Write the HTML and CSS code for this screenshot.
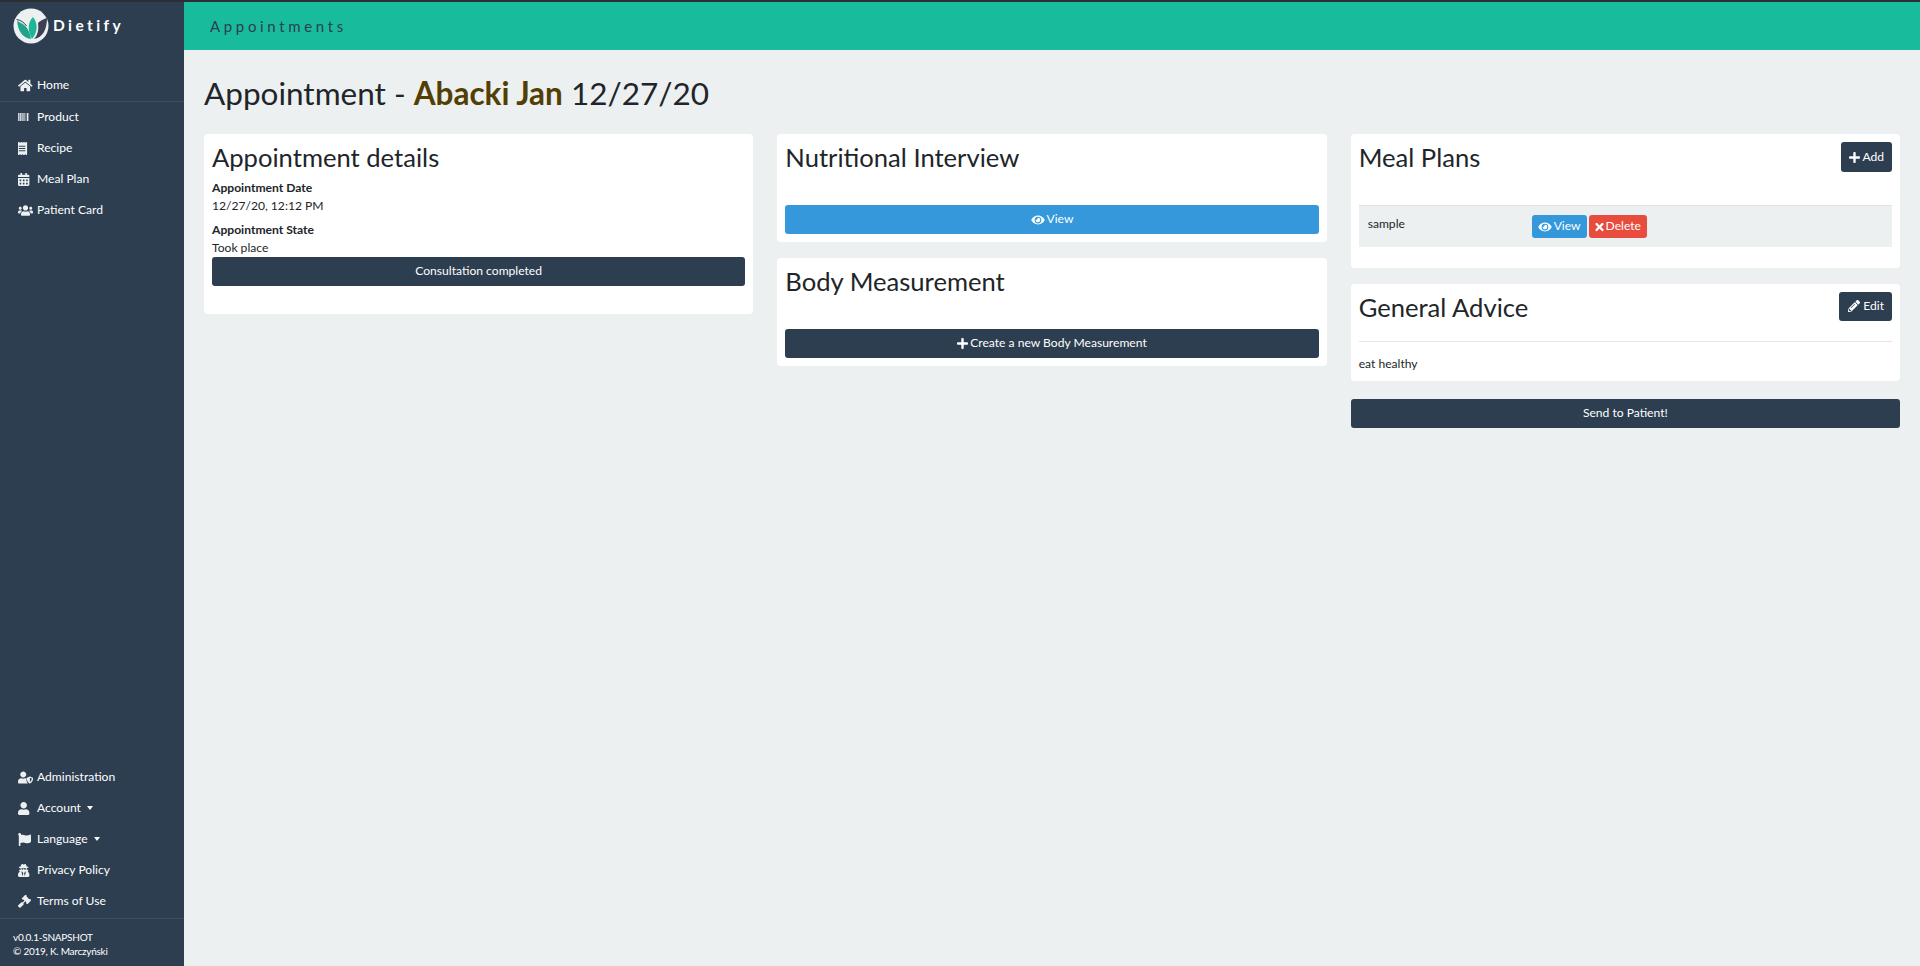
FILE: index.html
```html
<!DOCTYPE html>
<html lang="en">
<head>
<meta charset="utf-8">
<title>Dietify - Appointments</title>
<link rel="stylesheet" href="styles.css">
</head>
<body>
<svg class="defs" width="0" height="0" aria-hidden="true">
  <symbol id="i-home" viewBox="0 0 576 512" preserveAspectRatio="xMinYMid meet"><path d="M280.37 148.26L96 300.11V464a16 16 0 0 0 16 16l112.06-.29a16 16 0 0 0 15.92-16V368a16 16 0 0 1 16-16h64a16 16 0 0 1 16 16v95.64a16 16 0 0 0 16 16.05L464 480a16 16 0 0 0 16-16V300L295.67 148.26a12.19 12.19 0 0 0-15.3 0zM571.6 251.47L488 182.56V44.05a12 12 0 0 0-12-12h-56a12 12 0 0 0-12 12v72.61L318.47 43a48 48 0 0 0-61 0L4.34 251.47a12 12 0 0 0-1.6 16.9l25.5 31A12 12 0 0 0 45.15 301l235.22-193.74a12.19 12.19 0 0 1 15.3 0L530.9 301a12 12 0 0 0 16.9-1.6l25.5-31a12 12 0 0 0-1.7-16.93z"/></symbol>
  <symbol id="i-barcode" viewBox="0 0 720 512" preserveAspectRatio="xMinYMid meet"><path d="M0 40h40v384H0zM60 40h24v384H60zM104 40h40v384h-40zM164 40h24v384h-24zM208 40h40v384h-40zM268 40h24v384h-24zM312 40h40v384h-40zM420 40h80v384h-80z"/></symbol>
  <symbol id="i-receipt" viewBox="0 0 384 512" preserveAspectRatio="xMinYMid meet"><path d="M358 2L320 32 277 2a16 16 0 0 0-18 0l-43 30L173 2a16 16 0 0 0-18 0l-43 30L64 2C50-5 32 2 32 18v476c0 16 18 24 32 16l48-30 43 30a16 16 0 0 0 18 0l43-30 43 30a16 16 0 0 0 18 0l43-30 38 30c14 8 32 0 32-16V18c0-16-18-24-32-16zM320 360H64v-32h256zm0-88H64v-32h256zm0-88H64v-32h256z" transform="translate(-32 0)"/></symbol>
  <symbol id="i-calendar" viewBox="0 0 448 512" preserveAspectRatio="xMinYMid meet"><path d="M0 464c0 26.5 21.5 48 48 48h352c26.5 0 48-21.5 48-48V192H0v272zm320-196c0-6.6 5.4-12 12-12h40c6.6 0 12 5.4 12 12v40c0 6.6-5.4 12-12 12h-40c-6.6 0-12-5.4-12-12v-40zm0 128c0-6.6 5.4-12 12-12h40c6.6 0 12 5.4 12 12v40c0 6.6-5.4 12-12 12h-40c-6.6 0-12-5.4-12-12v-40zM192 268c0-6.6 5.4-12 12-12h40c6.6 0 12 5.4 12 12v40c0 6.6-5.4 12-12 12h-40c-6.6 0-12-5.4-12-12v-40zm0 128c0-6.6 5.4-12 12-12h40c6.6 0 12 5.4 12 12v40c0 6.6-5.4 12-12 12h-40c-6.6 0-12-5.4-12-12v-40zM64 268c0-6.6 5.4-12 12-12h40c6.6 0 12 5.4 12 12v40c0 6.6-5.4 12-12 12H76c-6.6 0-12-5.4-12-12v-40zm0 128c0-6.6 5.4-12 12-12h40c6.6 0 12 5.4 12 12v40c0 6.6-5.4 12-12 12H76c-6.6 0-12-5.4-12-12v-40zM400 64h-48V16c0-8.8-7.2-16-16-16h-32c-8.8 0-16 7.2-16 16v48H160V16c0-8.8-7.2-16-16-16h-32c-8.8 0-16 7.2-16 16v48H48C21.5 64 0 85.5 0 112v48h448v-48c0-26.5-21.5-48-48-48z"/></symbol>
  <symbol id="i-users" viewBox="0 0 640 512" preserveAspectRatio="xMinYMid meet"><path d="M96 224c35.3 0 64-28.7 64-64s-28.7-64-64-64-64 28.7-64 64 28.7 64 64 64zm448 0c35.3 0 64-28.7 64-64s-28.7-64-64-64-64 28.7-64 64 28.7 64 64 64zm32 32h-64c-17.6 0-33.5 7.1-45.1 18.6 40.3 22.1 68.9 62 75.1 109.4h66c17.7 0 32-14.3 32-32v-32c0-35.3-28.7-64-64-64zm-256 0c61.9 0 112-50.1 112-112S381.9 32 320 32 208 82.1 208 144s50.1 112 112 112zm76.8 32h-8.3c-20.8 10-43.9 16-68.5 16s-47.6-6-68.5-16h-8.3C179.6 288 128 339.6 128 403.2V432c0 26.5 21.5 48 48 48h288c26.5 0 48-21.5 48-48v-28.8c0-63.6-51.6-115.2-115.2-115.2zm-223.7-13.4C161.5 263.1 145.6 256 128 256H64c-35.3 0-64 28.7-64 64v32c0 17.7 14.3 32 32 32h65.9c6.3-47.4 34.9-87.3 75.2-109.4z"/></symbol>
  <symbol id="i-user-shield" viewBox="0 0 640 512" preserveAspectRatio="xMinYMid meet"><path d="M224 256c70.7 0 128-57.3 128-128S294.7 0 224 0 96 57.3 96 128s57.3 128 128 128zM358 288h-61c-22.2 10.2-46.9 16-73 16s-50.6-5.8-72.9-16h-16.7C60.2 288 0 348.2 0 422.4V464c0 26.5 21.5 48 48 48h352c9 0 17-2.4 24-6.6-40-40-66-104-66-190z"/><path fill-rule="evenodd" d="M634 265l-120-48a18 18 0 0 0-14 0l-120 48c-7 3-12 10-12 17 0 119 69 201 132 228a18 18 0 0 0 14 0c50-21 132-95 132-228 0-7-5-14-12-17zM507 448V268l80 32c-4 80-47 128-80 148z"/></symbol>
  <symbol id="i-user" viewBox="0 0 448 512" preserveAspectRatio="xMinYMid meet"><path d="M224 256c70.7 0 128-57.3 128-128S294.7 0 224 0 96 57.3 96 128s57.3 128 128 128zm89.6 32h-16.7c-22.2 10.2-46.9 16-72.9 16s-50.6-5.8-72.9-16h-16.7C60.2 288 0 348.2 0 422.4V464c0 26.5 21.5 48 48 48h352c26.5 0 48-21.5 48-48v-41.6c0-74.2-60.2-134.4-134.4-134.4z"/></symbol>
  <symbol id="i-flag" viewBox="0 0 512 512" preserveAspectRatio="xMinYMid meet"><path d="M349.565 98.783C295.978 98.783 251.721 64 184.348 64c-24.955 0-47.309 4.384-68.045 12.013a55.947 55.947 0 0 0 3.586-23.562C118.117 24.015 94.806 1.206 66.338.048 34.345-1.254 8 24.296 8 56c0 19.026 9.497 35.825 24 45.945V488c0 13.255 10.745 24 24 24h16c13.255 0 24-10.745 24-24v-94.4c28.311-12.064 63.582-22.122 114.435-22.122 53.588 0 97.844 34.783 165.217 34.783 48.169 0 86.667-16.294 122.505-40.858C506.84 359.452 512 349.571 512 339.045v-243.1c0-23.393-24.269-38.87-45.485-29.016-34.338 15.948-76.454 31.854-116.95 31.854z"/></symbol>
  <symbol id="i-secret" viewBox="0 0 448 512" preserveAspectRatio="xMinYMid meet"><path d="M383.9 308.3l23.9-62.6c4-10.5-3.7-21.7-15-21.7h-58.5c11-18.9 17.8-40.6 17.8-64v-.3c39.2-7.8 64-19.1 64-31.7 0-13.3-27.3-25.1-70.1-33-9.2-32.8-27-65.8-40.6-82.8-9.5-11.9-25.9-15.6-39.5-8.8l-27.6 13.8c-9 4.5-19.6 4.5-28.6 0L182.1 3.4c-13.6-6.8-30-3.1-39.5 8.8-13.5 17-31.4 50-40.6 82.8-42.7 7.9-70 19.7-70 33 0 12.6 24.8 23.9 64 31.7v.3c0 23.4 6.8 45.1 17.8 64H56.3c-11.5 0-19.2 11.7-14.7 22.3l25.8 60.2C27.3 329.8 0 372.7 0 422.4v44.8C0 491.9 20.1 512 44.8 512h358.4c24.7 0 44.8-20.1 44.8-44.8v-44.8c0-48.4-25.8-90.4-64.1-114.1zM176 480l-41.6-192 49.6 32 24 40-32 120zm96 0l-32-120 24-40 49.6-32L272 480zm41.7-298.5c-3.9 11.9-7 24.6-16.5 33.4-10.1 9.3-48 22.4-64-25-2.8-8.4-15.4-8.4-18.3 0-17 50.2-56 32.4-64 25-9.5-8.8-12.7-21.5-16.5-33.4-.8-2.5-6.3-5.7-6.3-5.8v-10.8c28.3 3.6 61 5.8 96 5.8s67.7-2.1 96-5.8v10.8c-.1.1-5.6 3.2-6.4 5.8z"/></symbol>
  <symbol id="i-gavel" viewBox="0 0 512 512" preserveAspectRatio="xMinYMid meet"><path d="M504.97 183.03l-22.63-22.63c-9.37-9.37-24.57-9.37-33.94 0l-5.66 5.66-113.14-113.14 5.66-5.66c9.37-9.37 9.37-24.57 0-33.94L312.63 .69c-9.37-9.37-24.57-9.37-33.94 0L153.97 125.4c-9.37 9.37-9.37 24.57 0 33.94l22.63 22.63c9.37 9.37 24.57 9.37 33.94 0l5.66-5.66 39.6 39.6-81.04 81.04-5.66-5.66c-12.5-12.5-32.76-12.5-45.25 0L9.37 405.76c-12.5 12.5-12.5 32.76 0 45.25l45.25 45.25c12.5 12.5 32.76 12.5 45.25 0l114.48-114.48c12.5-12.5 12.5-32.76 0-45.25l-5.66-5.66 81.04-81.04 39.6 39.6-5.66 5.66c-9.37 9.37-9.37 24.57 0 33.94l22.63 22.63c9.37 9.37 24.57 9.37 33.94 0l124.72-124.72c9.37-9.37 9.37-24.57 0-33.94z"/></symbol>
  <symbol id="i-eye" viewBox="0 0 576 512"><path d="M572.52 241.4C518.29 135.59 410.93 64 288 64S57.68 135.64 3.48 241.41a32.35 32.35 0 0 0 0 29.19C57.71 376.41 165.07 448 288 448s230.32-71.64 284.52-177.41a32.35 32.35 0 0 0 0-29.19zM288 400a144 144 0 1 1 144-144 143.93 143.93 0 0 1-144 144zm0-240a95.31 95.31 0 0 0-25.31 3.79 47.85 47.85 0 0 1-66.9 66.9A95.78 95.78 0 1 0 288 160z"/></symbol>
  <symbol id="i-plus" viewBox="0 0 448 512"><path d="M416 208H272V64c0-17.67-14.33-32-32-32h-32c-17.67 0-32 14.33-32 32v144H32c-17.67 0-32 14.33-32 32v32c0 17.67 14.33 32 32 32h144v144c0 17.67 14.33 32 32 32h32c17.67 0 32-14.33 32-32V304h144c17.67 0 32-14.33 32-32v-32c0-17.67-14.33-32-32-32z"/></symbol>
  <symbol id="i-times" viewBox="0 0 352 512"><path d="M242.72 256l100.07-100.07c12.28-12.28 12.28-32.19 0-44.48l-22.24-22.24c-12.28-12.28-32.19-12.28-44.48 0L176 189.28 75.93 89.21c-12.28-12.28-32.19-12.28-44.48 0L9.21 111.45c-12.28 12.28-12.28 32.19 0 44.48L109.28 256 9.21 356.07c-12.28 12.28-12.28 32.19 0 44.48l22.24 22.24c12.28 12.28 32.2 12.28 44.48 0L176 322.72l100.07 100.07c12.28 12.28 32.2 12.28 44.48 0l22.24-22.24c12.28-12.28 12.28-32.19 0-44.48L242.72 256z"/></symbol>
  <symbol id="i-pencil" viewBox="0 0 512 512"><path d="M497.9 142.1l-46.1 46.1c-4.7 4.7-12.3 4.7-17 0l-111-111c-4.7-4.7-4.7-12.3 0-17l46.1-46.1c18.7-18.7 49.1-18.7 67.9 0l60.1 60.1c18.8 18.7 18.8 49.1 0 67.9zM284.2 99.8L21.6 362.4.4 483.9c-2.9 16.4 11.4 30.6 27.8 27.8l121.5-21.3 262.6-262.6c4.7-4.7 4.7-12.3 0-17l-111-111c-4.8-4.7-12.4-4.7-17.1 0zM124.1 339.9c-5.5-5.5-5.5-14.3 0-19.8l154-154c5.5-5.5 14.3-5.5 19.8 0s5.5 14.3 0 19.8l-154 154c-5.5 5.5-14.3 5.5-19.8 0zM88 424h48v36.3l-64.5 11.3-31.1-31.1L51.7 376H88v48z"/></symbol>
</svg>

<div class="app">
  <aside class="sidebar">
    <div class="brand">
      <svg class="logo" viewBox="0 0 36 36" aria-hidden="true">
        <circle cx="18" cy="18" r="17.5" fill="#ecf0f1"/>
        <path d="M4 13C5 22 9 30 18 31C17 25 15 20 11 17C9 15 6 14 4 13z" fill="#1fa48a"/>
        <path d="M3.5 11.5C7 12 11 14 13.5 18" fill="none" stroke="#2c3e50" stroke-width="1"/>
        <path d="M20 9C15 14 14 22 19 31C25 24 25 15 20 9z" fill="#1fb597"/>
        <path d="M34 10C30 11 27 13 25 15C26 21 25 27 21 31C29 30 34 22 34 10z" fill="#3c3f55"/>
      </svg>
      <span class="brand-name">Dietify</span>
    </div>
    <nav class="nav nav-main">
      <a class="nav-item nav-home"><svg class="ic"><use href="#i-home"/></svg>Home</a>
      <a class="nav-item"><svg class="ic"><use href="#i-barcode"/></svg>Product</a>
      <a class="nav-item"><svg class="ic"><use href="#i-receipt"/></svg>Recipe</a>
      <a class="nav-item"><svg class="ic"><use href="#i-calendar"/></svg>Meal Plan</a>
      <a class="nav-item"><svg class="ic"><use href="#i-users"/></svg>Patient Card</a>
    </nav>
    <nav class="nav nav-bottom">
      <a class="nav-item"><svg class="ic"><use href="#i-user-shield"/></svg>Administration</a>
      <a class="nav-item"><svg class="ic"><use href="#i-user"/></svg>Account<span class="caret"></span></a>
      <a class="nav-item"><svg class="ic"><use href="#i-flag"/></svg>Language<span class="caret"></span></a>
      <a class="nav-item"><svg class="ic"><use href="#i-secret"/></svg>Privacy Policy</a>
      <a class="nav-item"><svg class="ic"><use href="#i-gavel"/></svg>Terms of Use</a>
    </nav>
    <footer class="side-foot">
      <div>v0.0.1-SNAPSHOT</div>
      <div>© 2019, K. Marczyński</div>
    </footer>
  </aside>

  <div class="main">
    <header class="topbar">Appointments</header>
    <main class="content">
      <h1 class="page-title">Appointment - <strong class="patient">Abacki Jan</strong> 12/27/20</h1>
      <div class="columns">
        <section class="column">
          <div class="card card-details">
            <h3>Appointment details</h3>
            <div class="field-label">Appointment Date</div>
            <div class="field-value">12/27/20, 12:12 PM</div>
            <div class="field-label">Appointment State</div>
            <div class="field-value">Took place</div>
            <button class="btn btn-dark btn-block">Consultation completed</button>
          </div>
        </section>

        <section class="column">
          <div class="card">
            <h3 class="spaced">Nutritional Interview</h3>
            <button class="btn btn-blue btn-block"><svg class="bi"><use href="#i-eye"/></svg>View</button>
          </div>
          <div class="card">
            <h3 class="spaced">Body Measurement</h3>
            <button class="btn btn-dark btn-block"><svg class="bi bi-plus"><use href="#i-plus"/></svg>Create a new Body Measurement</button>
          </div>
        </section>

        <section class="column">
          <div class="card card-plans">
            <div class="card-head">
              <h3>Meal Plans</h3>
              <button class="btn btn-dark btn-head"><svg class="bi bi-plus"><use href="#i-plus"/></svg>Add</button>
            </div>
            <table class="plans">
              <tr>
                <td class="plan-name">sample</td>
                <td class="plan-actions">
                  <button class="btn btn-blue btn-sm"><svg class="bi"><use href="#i-eye"/></svg>View</button>
                  <button class="btn btn-red btn-sm"><svg class="bi bi-x"><use href="#i-times"/></svg>Delete</button>
                </td>
              </tr>
            </table>
          </div>
          <div class="card card-advice">
            <div class="card-head">
              <h3>General Advice</h3>
              <button class="btn btn-dark btn-head btn-edit"><svg class="bi"><use href="#i-pencil"/></svg>Edit</button>
            </div>
            <hr class="rule">
            <p class="advice">eat healthy</p>
          </div>
          <button class="btn btn-dark btn-block">Send to Patient!</button>
        </section>
      </div>
    </main>
  </div>
</div>
</body>
</html>
```
FILE: styles.css
```css
* { box-sizing: border-box; }
html, body { margin: 0; height: 100%; overflow: hidden; }
body {
  font-family: "Lato", "Liberation Sans", sans-serif;
  font-size: 12.1px;
  line-height: 1.5;
  color: #212529;
  background: #ecf0f1;
}
.defs { position: absolute; }
.app {
  display: flex;
  height: 100%;
  border-top: 2px solid #2b2f33;
}

/* Sidebar */
.sidebar {
  width: 184px;
  flex: none;
  display: flex;
  flex-direction: column;
  background: #2c3e50;
  color: #fff;
}
.brand {
  height: 48px;
  padding: 6px 0 0 13px;
  display: flex;
  align-items: flex-start;
}
.logo { width: 36px; height: 36px; flex: none; }
.brand-name {
  margin: 7px 0 0 4px;
  font-size: 15.5px;
  font-weight: 700;
  letter-spacing: 3.4px;
  line-height: 20px;
}
.nav { display: flex; flex-direction: column; }
.nav-main { margin-top: 20px; }
.nav-bottom { margin-top: auto; }
.nav-item {
  height: 31px;
  padding-left: 18px;
  display: flex;
  align-items: center;
  color: #fff;
  font-size: 12.1px;
}
.nav-home { height: 32px; border-bottom: 1px solid #3a4c5e; }
.ic {
  width: 15px;
  height: 13px;
  margin-right: 4px;
  flex: none;
  fill: #ecf0f1;
}
.caret {
  margin-left: 6px;
  margin-top: -2px;
  border-top: 4px solid #fff;
  border-left: 3.5px solid transparent;
  border-right: 3.5px solid transparent;
}
.side-foot {
  margin-top: 1px;
  height: 48px;
  padding: 11px 0 0 13px;
  border-top: 1px solid #3a4c5e;
  font-size: 10px;
  letter-spacing: -0.25px;
  line-height: 14px;
}

/* Main */
.main { flex: 1; min-width: 0; display: flex; flex-direction: column; }
.topbar {
  height: 48px;
  flex: none;
  padding-left: 26px;
  display: flex;
  align-items: center;
  background: #18bc9c;
  color: #2c3e50;
  font-size: 15px;
  letter-spacing: 3.65px;
}
.content { padding: 0 20px; }
.page-title {
  margin: 0;
  padding-top: 21px;
  height: 84px;
  font-size: 31.5px;
  font-weight: 400;
  line-height: 44px;
}
.patient { color: #533f03; font-weight: 700; }
.columns {
  display: grid;
  grid-template-columns: repeat(3, 1fr);
  column-gap: 24px;
  align-items: start;
}
.column { display: flex; flex-direction: column; }
.card {
  background: #fff;
  border-radius: 4px;
  padding: 8px;
  margin-bottom: 16px;
}
.card h3 {
  margin: 0;
  font-size: 25.6px;
  font-weight: 400;
  line-height: 31px;
}
.card h3.spaced { margin-bottom: 32px; }
.card-details { height: 180px; }
.field-label { font-weight: 700; line-height: 18px; margin-top: 6px; }
.field-value { line-height: 18px; }
.card-head { display: flex; justify-content: space-between; align-items: flex-start; }

/* Buttons */
.btn {
  border: 0;
  border-radius: 3px;
  color: #fff;
  font: 12.1px/1.5 "Lato", "Liberation Sans", sans-serif;
  height: 29px;
  padding: 0 8px;
  display: inline-flex;
  align-items: center;
  justify-content: center;
}
.btn-block { width: 100%; display: flex; }
.btn-dark { background: #2c3e50; }
.btn-blue { background: #3498db; }
.btn-red { background: #e74c3c; }
.btn-head { height: 30px; }
.btn-edit { height: 29px; }
.btn-sm { height: 23px; padding: 0 6px; }
.bi { width: 14px; height: 12px; margin-right: 2px; fill: #fff; flex: none; }
.bi-plus { width: 11px; height: 13px; }
.bi-x { width: 9px; height: 12px; }

/* Meal plans */
.plans {
  width: 100%;
  margin-top: 32px;
  border-collapse: collapse;
  background: #ecf0f1;
  border-top: 1px solid #dee2e6;
}
.plans td { vertical-align: top; height: 41px; }
.plan-name { width: 173px; padding: 9px; line-height: 18px; }
.plan-actions { padding: 9px 0 0; font-size: 0; }
.plan-actions .btn + .btn { margin-left: 2px; }
.card-plans { padding-bottom: 21px; }

/* Advice */
.rule { margin: 18px 0 0; border: 0; border-top: 1px solid #e2e6e8; }
.advice { margin: 13px 0 0; line-height: 18px; }
.card-advice { margin-bottom: 18px; }
```
